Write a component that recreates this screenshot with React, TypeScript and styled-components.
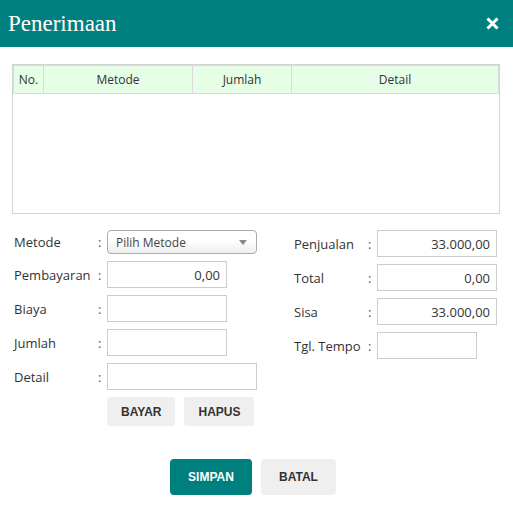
import styled, { createGlobalStyle } from 'styled-components';

const GlobalStyle = createGlobalStyle`
  * { box-sizing: border-box; }
  body {
    margin: 0;
    background: #ffffff;
    font-family: "Open Sans", "Noto Sans", sans-serif;
    color: #333333;
  }
`;

const leftRows = [
    { label: 'Pembayaran', value: '0,00', wide: false },
    { label: 'Biaya', value: '', wide: false },
    { label: 'Jumlah', value: '', wide: false },
    { label: 'Detail', value: '', wide: true },
];

const rightRows = [
    { label: 'Penjualan', value: '33.000,00', width: 120 },
    { label: 'Total', value: '0,00', width: 120 },
    { label: 'Sisa', value: '33.000,00', width: 120 },
    { label: 'Tgl. Tempo', value: '', width: 100 },
];

export default function App() {
    return (
        <Dialog>
            <GlobalStyle />
            <Header>
                <Title>Penerimaan</Title>
                <CloseButton aria-label="close">
                    <svg width="13" height="13" viewBox="0 0 13 13">
                        <path d="M1.5 1.5 L11.5 11.5 M11.5 1.5 L1.5 11.5" stroke="#fff" strokeWidth="3" strokeLinecap="butt" />
                    </svg>
                </CloseButton>
            </Header>
            <Body>
                <TableBox>
                    <Table>
                        <thead>
                            <tr>
                                <Th $w={30}>No.</Th>
                                <Th $w={149}>Metode</Th>
                                <Th $w={99}>Jumlah</Th>
                                <Th>Detail</Th>
                            </tr>
                        </thead>
                    </Table>
                </TableBox>

                <FormArea>
                    <Column>
                        <Row>
                            <Label $w={84}>Metode</Label>
                            <Colon $w={9}>:</Colon>
                            <Select>
                                <span>Pilih Metode</span>
                                <Caret />
                            </Select>
                        </Row>
                        {leftRows.map((r) => (
                            <Row key={r.label}>
                                <Label $w={84}>{r.label}</Label>
                                <Colon $w={9}>:</Colon>
                                <Field style={{ width: r.wide ? 150 : 120 }}>{r.value}</Field>
                            </Row>
                        ))}
                        <ButtonRow>
                            <SmallButton>BAYAR</SmallButton>
                            <SmallButton>HAPUS</SmallButton>
                        </ButtonRow>
                    </Column>
                    <Column>
                        {rightRows.map((r) => (
                            <Row key={r.label}>
                                <Label $w={74}>{r.label}</Label>
                                <Colon $w={9}>:</Colon>
                                <Field style={{ width: r.width }}>{r.value}</Field>
                            </Row>
                        ))}
                    </Column>
                </FormArea>

                <Footer>
                    <ActionButton $primary>SIMPAN</ActionButton>
                    <ActionButton>BATAL</ActionButton>
                </Footer>
            </Body>
        </Dialog>
    );
}

const Dialog = styled.div`
    width: 513px;
    height: 515px;
    background: #fff;
`;

const Header = styled.div`
    height: 47px;
    background: #007f7f;
    display: flex;
    align-items: center;
    justify-content: space-between;
    padding: 0 14px 0 8px;
`;

const Title = styled.h1`
    margin: 0;
    font-family: "Liberation Serif", "DejaVu Serif", serif;
    font-weight: normal;
    font-size: 23px;
    color: #fff;
`;

const CloseButton = styled.button`
    border: none;
    background: none;
    padding: 0;
    display: flex;
    cursor: pointer;
`;

const Body = styled.div`
    padding: 17px 14px 0 12px;
`;

const TableBox = styled.div`
    width: 488px;
    height: 150px;
    border: 1px solid #d3d3d3;
`;

const Table = styled.table`
    width: 100%;
    border-collapse: collapse;
`;

const Th = styled.th<{ $w?: number }>`
    width: ${(p) => (p.$w ? `${p.$w}px` : 'auto')};
    height: 28px;
    background: #e5fee5;
    border: 1px solid #dadada;
    font-weight: normal;
    font-size: 12px;
    color: #333;
    padding: 0;
`;

const FormArea = styled.div`
    display: grid;
    grid-template-columns: 280px 1fr;
    margin-top: 16px;
    padding-left: 2px;
`;

const Column = styled.div`
    display: flex;
    flex-direction: column;
    gap: 7px;
`;

const Row = styled.div`
    display: flex;
    align-items: center;
    min-height: 24px;
`;

const Label = styled.span<{ $w: number }>`
    width: ${(p) => p.$w}px;
    font-size: 13px;
    color: #333;
`;

const Colon = styled.span<{ $w: number }>`
    width: ${(p) => p.$w}px;
    font-size: 13px;
    color: #555;
`;

const Select = styled.div`
    width: 150px;
    height: 24px;
    border: 1px solid #aaa;
    border-radius: 4px;
    background: linear-gradient(#ffffff 40%, #eeeeee);
    display: flex;
    align-items: center;
    justify-content: space-between;
    padding: 0 9px 0 8px;
    font-size: 12px;
    color: #444;
`;

const Caret = styled.span`
    width: 0;
    height: 0;
    border-left: 4px solid transparent;
    border-right: 4px solid transparent;
    border-top: 5px solid #888;
`;

const Field = styled.div`
    height: 27px;
    border: 1px solid #cccccc;
    background: #fff;
    display: flex;
    align-items: center;
    justify-content: flex-end;
    padding: 0 6px;
    font-size: 13px;
    color: #333;
`;

const ButtonRow = styled.div`
    display: flex;
    gap: 9px;
    padding-left: 93px;
`;

const SmallButton = styled.button`
    height: 29px;
    padding: 0 14px;
    border: none;
    border-radius: 3px;
    background: #efefef;
    font-family: "Liberation Sans", Arial, sans-serif;
    font-weight: bold;
    font-size: 12px;
    color: #333;
`;

const Footer = styled.div`
    display: flex;
    gap: 9px;
    margin-top: 33px;
    padding-left: 158px;
`;

const ActionButton = styled.button<{ $primary?: boolean }>`
    height: 36px;
    padding: 0;
    width: ${(p) => (p.$primary ? 82 : 75)}px;
    border: none;
    border-radius: 4px;
    background: ${(p) => (p.$primary ? '#007f7f' : '#efefef')};
    color: ${(p) => (p.$primary ? '#fff' : '#333')};
    font-family: "Liberation Sans", Arial, sans-serif;
    font-weight: bold;
    font-size: 12px;
`;
